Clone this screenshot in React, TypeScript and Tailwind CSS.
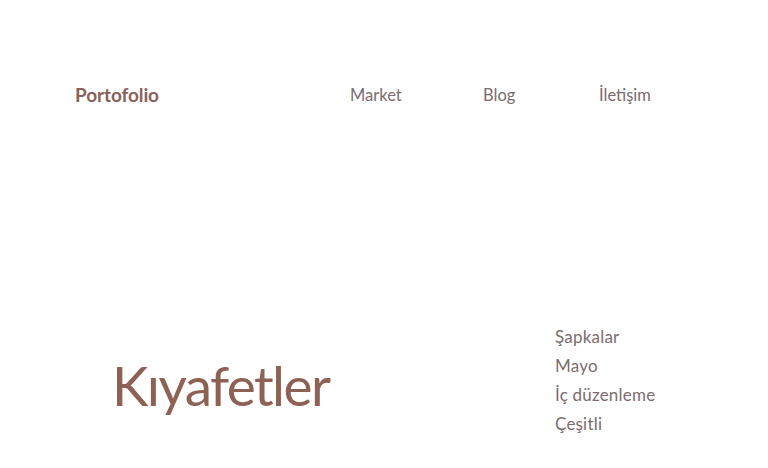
export default function App() {
  const navItems = [
    { label: 'Market', w: 'w-[133px]' },
    { label: 'Blog', w: 'w-[116px]' },
    { label: 'İletişim', w: '' },
  ];
  const categories = ['Şapkalar', 'Mayo', 'İç düzenleme', 'Çeşitli'];

  return (
    <div className="w-[768px] h-[468px] bg-white overflow-hidden font-['Lato','Open_Sans',sans-serif]">
      {/* Header */}
      <header className="flex items-center pt-[83px] pl-[75px]">
        <a className="w-[275px] text-[19px] font-bold tracking-[-0.1px] text-[#8a6259] leading-6">Portofolio</a>
        <nav className="flex items-center">
          {navItems.map((item) => (
            <a key={item.label} className={`${item.w} text-[16.5px] text-[#7c6c6d] leading-6`}>
              {item.label}
            </a>
          ))}
        </nav>
      </header>

      {/* Hero */}
      <section className="flex items-start mt-[215px]">
        <h1 className="w-[555px] pl-[112px] mt-[33px] text-[55px] leading-[60px] text-[#8d6154] font-normal tracking-[-1.6px]">
          Kıyafetler
        </h1>
        <ul className="flex flex-col">
          {categories.map((c) => (
            <li key={c} className="text-[17px] leading-[29px] tracking-[0.2px] text-[#7c6c6d]">
              {c}
            </li>
          ))}
        </ul>
      </section>
    </div>
  );
}
